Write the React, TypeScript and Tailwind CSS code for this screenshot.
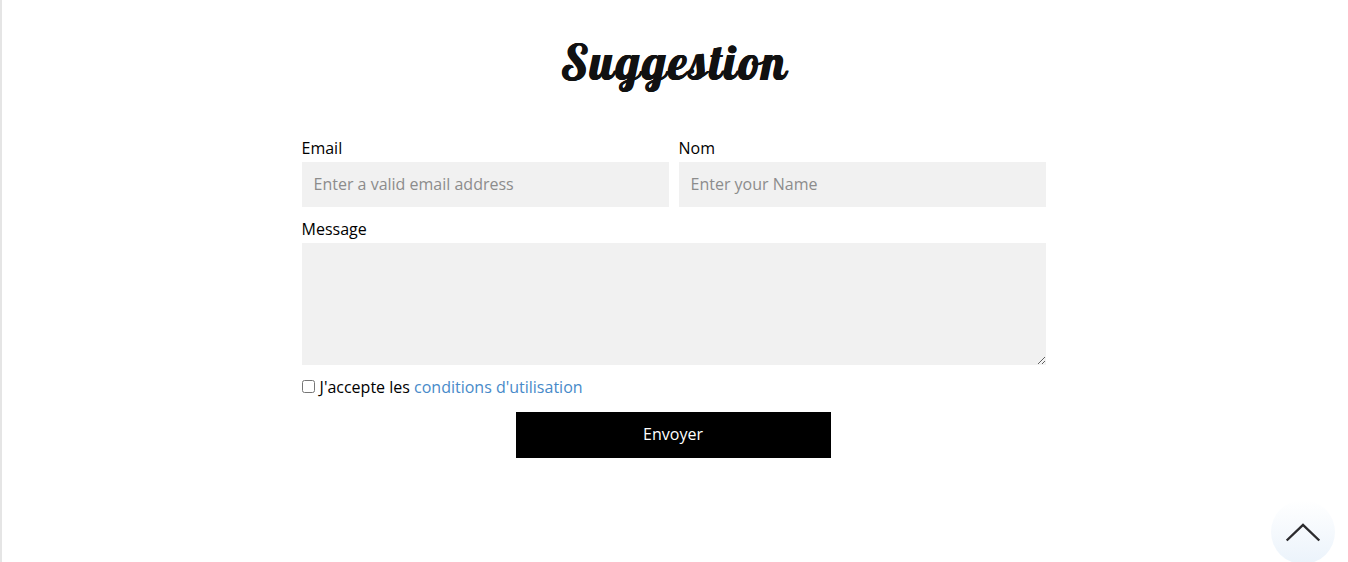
import React from "react";

const fieldClass =
  "block h-[45px] w-full bg-[#f1f1f1] pr-3 pl-[11.5px] pb-px text-base text-black outline-none placeholder:text-[#8c8c8c] placeholder:opacity-100";
const labelClass = "-ml-[0.5px] block h-[26px] leading-[24px]";

export default function App() {
  return (
    <main className="relative flex h-[562px] flex-col items-center overflow-hidden border-l-2 border-[#e5e5e5] bg-white pr-[2px] font-['Open_Sans',sans-serif] text-base text-black">
      <h1 className="mt-[24px] h-[112px] font-['Lobster','Liberation_Serif',serif] text-[48px] leading-[76px] font-normal tracking-[1.95px] text-[#111111] [text-shadow:0.5px_0_0_#111111,1px_0_0_#111111]">
        Suggestion
      </h1>

      <form className="w-[744px]" onSubmit={(e) => e.preventDefault()}>
        <div className="grid grid-cols-2 gap-[10px]">
          <div>
            <label htmlFor="email" className={labelClass}>Email</label>
            <input id="email" type="email" placeholder="Enter a valid email address" className={fieldClass} />
          </div>
          <div>
            <label htmlFor="name" className={labelClass}>Nom</label>
            <input id="name" type="text" placeholder="Enter your Name" className={fieldClass} />
          </div>
        </div>

        <div className="mt-[10px]">
          <label htmlFor="message" className={labelClass}>Message</label>
          <textarea id="message" className="block h-[122px] w-full resize bg-[#f1f1f1] px-3 py-2.5 outline-none" />
        </div>

        <div className="mt-[10px] flex h-[37px] leading-[24px]">
          <input id="terms" type="checkbox" className="mt-[5px] mr-[4.6px] h-[13px] w-[13px]" />
          <label htmlFor="terms">
            J'accepte les <a href="#" className="text-[#478ac9]">conditions d'utilisation</a>
          </label>
        </div>

        <button type="submit" className="ml-[214px] block h-[46px] w-[315px] bg-black pr-[1px] pb-[2px] text-white">
          Envoyer
        </button>
      </form>

      <button
        type="button"
        aria-label="Retour en haut"
        className="absolute top-[500px] right-[13px] h-16 w-16 rounded-full bg-linear-to-b from-white to-[#ebf3fb]"
      >
        <svg viewBox="0 0 64 64" className="h-16 w-16" fill="none" stroke="#2b2b2e" strokeWidth="2.4">
          <path d="M15.7 40.5 L32 25 L48.3 40.5" />
        </svg>
      </button>
    </main>
  );
}
